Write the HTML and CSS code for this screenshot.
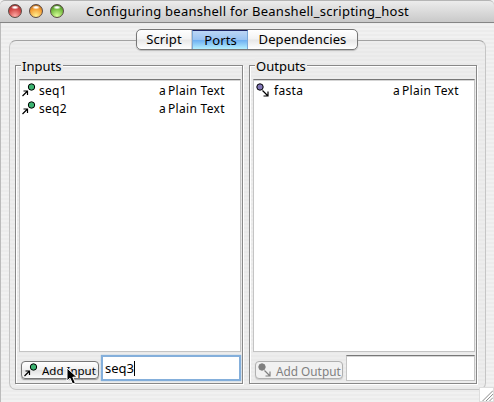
FILE: index.html
```
<!DOCTYPE html>
<html lang="en">
<head>
<meta charset="utf-8">
<title>Configuring beanshell for Beanshell_scripting_host</title>
<link rel="stylesheet" href="styles.css">
</head>
<body>
<svg class="defs" width="0" height="0">
  <symbol id="in" viewBox="0 0 14 14">
    <path d="M0.5 13L5 8.5M1.5 8H5.5V12" fill="none" stroke="#000" stroke-width="1.2"/>
    <circle cx="9.5" cy="4" r="3.2" fill="#3cb371" stroke="#000"/>
  </symbol>
  <symbol id="out" viewBox="0 0 14 14">
    <path d="M6.5 7.5L11.5 12.5M12 8.5V13H7.5" fill="none" stroke="currentColor" stroke-width="1.2"/>
    <circle class="dot" cx="4" cy="4" r="3.2" stroke="currentColor"/>
  </symbol>
</svg>
<header class="titlebar">
  <div class="lights"><i class="light red"></i><i class="light amber"></i><i class="light green"></i></div>
  <h1 class="title">Configuring beanshell for Beanshell_scripting_host</h1>
</header>
<main class="content">
  <nav class="tabs">
    <span class="tab script">Script</span><span class="tab ports active">Ports</span><span class="tab deps">Dependencies</span>
  </nav>
  <div class="pane">
    <section class="group">
      <h2 class="legend inputs">Inputs</h2>
      <ul class="list">
        <li class="row"><svg class="icon"><use href="#in"/></svg><span class="name seq">seq1</span><span class="type"><span class="art">a</span>Plain Text</span></li>
        <li class="row"><svg class="icon"><use href="#in"/></svg><span class="name seq">seq2</span><span class="type"><span class="art">a</span>Plain Text</span></li>
      </ul>
      <div class="add">
        <div class="button add-in"><svg class="icon"><use href="#in"/></svg><span>Add Input</span>
          <svg class="cursor" viewBox="0 0 13 18"><path d="M1 1V14L4 11.2L6.6 17L9.3 15.8L6.8 10.2H11Z" fill="#000" stroke="#fff"/></svg>
        </div>
        <div class="field focused">seq3<i class="caret"></i></div>
      </div>
    </section>
    <section class="group">
      <h2 class="legend outputs">Outputs</h2>
      <ul class="list">
        <li class="row"><svg class="icon out"><use href="#out"/></svg><span class="name fasta">fasta</span><span class="type"><span class="art">a</span>Plain Text</span></li>
      </ul>
      <div class="add">
        <div class="button add-out disabled"><svg class="icon"><use href="#out"/></svg><span>Add Output</span></div>
        <div class="field"></div>
      </div>
    </section>
  </div>
</main>
<svg class="grip" viewBox="0 0 15 15"><path d="M3 15L15 3M7 15L15 7M11 15L15 11" stroke="#777" fill="none"/></svg>
</body>
</html>
```
FILE: styles.css
```
* { box-sizing: border-box; }
body {
  margin: 0;
  width: 494px;
  height: 402px;
  overflow: hidden;
  position: relative;
  display: flex;
  flex-direction: column;
  font: 12px/18px "Noto Sans", "Open Sans", sans-serif;
  color: #000;
  background: repeating-linear-gradient(#f1f1f1 0 2px, #ececec 2px 4px);
}
h1, h2, ul { margin: 0; padding: 0; font-weight: normal; list-style: none; }
.defs { position: absolute; }
.titlebar {
  height: 23px;
  flex: none;
  display: flex;
  background: linear-gradient(#ececec, #c9c9c9);
  border-top: 1px solid #b5b5b5;
  border-bottom: 1px solid #858585;
  border-radius: 5px 5px 0 0;
}
.lights { display: flex; gap: 7px; padding: 3px 0 0 8px; width: 86px; }
.light {
  width: 14px;
  height: 14px;
  border-radius: 50%;
  border: 1px solid #5a4a44;
}
.red { background: radial-gradient(ellipse 4px 2px at 50% 20%, #fff 30%, transparent), radial-gradient(circle at 50% 90%, #ffaaa5, #d44b49 55%, #8d2524); }
.amber { background: radial-gradient(ellipse 4px 2px at 50% 20%, #fff 30%, transparent), radial-gradient(circle at 50% 90%, #ffef90, #f49c31 60%, #9a5613); }
.green { background: radial-gradient(ellipse 4px 2px at 50% 20%, #fff 30%, transparent), radial-gradient(circle at 50% 90%, #d8ff9a, #71b93d 60%, #336b1a); }
.title { font-size: 13px; line-height: 21px; white-space: nowrap; letter-spacing: 0.25px; }
.content {
  flex: 1;
  padding: 6px 8px 12px;
  border-left: 1px solid #bbb;
  display: flex;
  flex-direction: column;
}
.tabs {
  display: flex;
  width: 222px;
  height: 21px;
  margin-left: 127px;
  border: 1px solid #777;
  border-radius: 5px;
  overflow: hidden;
  z-index: 1;
  background: linear-gradient(#fff, #f3f3f3 48%, #e7e7e7 52%, #fff);
  box-shadow: 0 1px 1px #bbb;
}
.tab { text-align: center; font-size: 13px; line-height: 19px; letter-spacing: 0.1px; }
.tab.script { width: 55px; border-right: 1px solid #ccc; }
.tab.ports { width: 56px; }
.tab.deps { flex: 1; }
.tab.active {
  background: linear-gradient(#bcd6f5, #9ac4f2 48%, #6eb0f1 52%, #b5f0ff);
  border: 1px solid #7aa8d8;
  border-top-color: #1c2464;
  border-bottom: 0;
  line-height: 18px;
  padding-left: 1px;
}
.pane {
  flex: 1;
  margin-top: -10px;
  border: 1px solid #aaa;
  border-color: #a2a2a2 #c5c5c5 #c5c5c5;
  border-radius: 7px;
  background: repeating-linear-gradient(#ededed 0 2px, #e9e9e9 2px 4px);
  display: grid;
  grid-template-columns: 228px 228px;
  gap: 6px;
  padding: 24px 0 5px 5px;
}
.group {
  border: 1px solid #888;
  box-shadow: 1px 1px 0 #fff, inset 1px 1px 0 #fff;
  padding: 0 1px 1px 3px;
  display: flex;
  flex-direction: column;
}
.legend {
  height: 16px;
  margin: -8px 0 5px 2px;
  padding: 0 1px;
  font-size: 13px;
  line-height: 17px;
  white-space: nowrap;
  background: #ebebeb;
}
.legend.inputs { width: 42px; }
.legend.outputs { width: 52px; }
.list {
  height: 273px;
  width: 222px;
  border: 1px solid #c4c4c4;
  border-top: 1px solid #777;
  background: #fff;
  padding: 2px 0;
  box-shadow: inset 0 1px 0 #d5d5d5;
}
.row { display: flex; height: 18px; }
.icon { width: 14px; height: 14px; margin: 1px 0 0 2px; flex: none; }
.dot { fill: #8278b8; }
.name { width: 123px; padding-left: 3px; letter-spacing: 0.3px; }
.fasta { padding-left: 4px; }
.type { white-space: nowrap; display: flex; letter-spacing: 0.3px; }
.art { width: 9px; }
.add { display: flex; align-items: center; height: 26px; margin-top: 3px; width: 222px; }
.button {
  height: 18px;
  margin: 3px 0 0 2px;
  border: 1px solid #777;
  border-radius: 4px;
  background: linear-gradient(#fff, #f1f1f1 48%, #e2e2e2 52%, #fafafa);
  box-shadow: 0 1px 1px #999;
  display: flex;
  line-height: 18px;
  white-space: nowrap;
  position: relative;
}
.button .icon { margin: 1px 4px 0 2px; }
.add-in { width: 78px; margin-right: 2px; font-size: 11.5px; }
.add-out { width: 88px; margin-right: 3px; font-size: 11.8px; }
.disabled { color: #808080; border-color: #b0b0b0; box-shadow: 0 1px 1px #ccc; background: #f1f1f1; }
.disabled .icon { filter: grayscale(1); }
.field {
  height: 26px;
  flex: 1;
  background: #fff;
  border: 1px solid #c4c4c4;
  border-top-color: #777;
  box-shadow: inset 0 1px 0 #d5d5d5;
  display: flex;
  align-items: center;
}
.focused { border: 2px solid #84afdb; box-shadow: 0 0 1px #84afdb; padding-left: 2px; font-size: 13px; }
.caret { width: 1px; height: 15px; background: #000; }
.cursor { position: absolute; left: 44px; top: 5px; width: 13px; height: 18px; z-index: 2; }
.grip { position: absolute; right: 0; bottom: 0; width: 15px; height: 15px; background: #fff; border: 1px solid #ddd; }
```
